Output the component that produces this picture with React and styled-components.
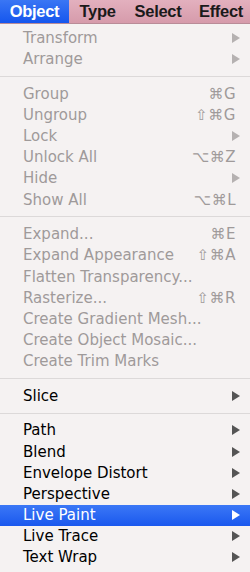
import React from "react";
import styled, { createGlobalStyle } from "styled-components";

const GlobalStyle = createGlobalStyle`
  html, body {
    margin: 0;
    padding: 0;
    background: #f5f2f2;
  }
  body {
    width: 250px;
    height: 572px;
    overflow: hidden;
  }
`;

const Screen = styled.div`
  width: 250px;
  height: 572px;
  display: flex;
  flex-direction: column;
  background: #f5f2f2;
  overflow: hidden;
`;

const MenuBar = styled.div`
  height: 24px;
  display: flex;
  align-items: stretch;
  background: linear-gradient(#e3b0be, #d69bab);
  border-bottom: 1px solid #b98c98;
  box-sizing: border-box;
  font-family: "Liberation Sans", Arial, sans-serif;
  font-weight: bold;
  font-size: 16.5px;
  letter-spacing: -0.3px;
`;

const Title = styled.div`
  width: ${(p) => p.$w}px;
  flex: none;
  display: flex;
  align-items: center;
  justify-content: center;
  color: ${(p) => (p.$active ? "#fff" : "#1a1a1a")};
  background: ${(p) =>
    p.$active ? "linear-gradient(#3a76f4, #1556ee)" : "transparent"};
  white-space: nowrap;
`;

const Menu = styled.div`
  display: flex;
  flex-direction: column;
  padding: 3.4px 0;
  font-family: "DejaVu Sans", sans-serif;
  font-size: 15px;
`;

const Row = styled.div`
  height: 21.17px;
  display: flex;
  align-items: center;
  padding: 0 10px 0 23px;
  color: ${(p) => (p.$active ? "#fff" : p.$disabled ? "#9f9a9a" : "#000")};
  background: ${(p) =>
    p.$active ? "linear-gradient(#3b78f6, #1a58ee)" : "transparent"};
  white-space: nowrap;
`;

const Label = styled.span`
  flex: 1;
`;

const Shortcut = styled.span`
  padding-right: 4px;
  letter-spacing: 0.5px;
`;

const Arrow = styled.span`
  width: 0;
  height: 0;
  border-top: 5px solid transparent;
  border-bottom: 5px solid transparent;
  border-left: 8px solid
    ${(p) => (p.$active ? "#fff" : p.$disabled ? "#b5b1b1" : "#555")};
`;

const Separator = styled.div`
  height: 13.5px;
  display: flex;
  align-items: center;

  &::after {
    content: "";
    flex: 1;
    height: 1px;
    background: #dcd9d9;
  }
`;

const titles = [
  { label: "Object", w: 69, active: true },
  { label: "Type", w: 57 },
  { label: "Select", w: 64 },
  { label: "Effect", w: 62 },
];

const groups = [
  [
    { label: "Transform", sub: true, disabled: true },
    { label: "Arrange", sub: true, disabled: true },
  ],
  [
    { label: "Group", key: "⌘G", disabled: true },
    { label: "Ungroup", key: "⇧⌘G", disabled: true },
    { label: "Lock", sub: true, disabled: true },
    { label: "Unlock All", key: "⌥⌘Z", disabled: true },
    { label: "Hide", sub: true, disabled: true },
    { label: "Show All", key: "⌥⌘L", disabled: true },
  ],
  [
    { label: "Expand...", key: "⌘E", disabled: true },
    { label: "Expand Appearance", key: "⇧⌘A", disabled: true },
    { label: "Flatten Transparency...", disabled: true },
    { label: "Rasterize...", key: "⇧⌘R", disabled: true },
    { label: "Create Gradient Mesh...", disabled: true },
    { label: "Create Object Mosaic...", disabled: true },
    { label: "Create Trim Marks", disabled: true },
  ],
  [{ label: "Slice", sub: true }],
  [
    { label: "Path", sub: true },
    { label: "Blend", sub: true },
    { label: "Envelope Distort", sub: true },
    { label: "Perspective", sub: true },
    { label: "Live Paint", sub: true, active: true },
    { label: "Live Trace", sub: true },
    { label: "Text Wrap", sub: true },
  ],
];

export default function App() {
  return (
    <Screen>
      <GlobalStyle />
      <MenuBar>
        {titles.map((t) => (
          <Title key={t.label} $w={t.w} $active={t.active}>
            {t.label}
          </Title>
        ))}
      </MenuBar>
      <Menu>
        {groups.map((items, gi) => (
          <React.Fragment key={gi}>
            {gi > 0 && <Separator />}
            {items.map((it) => (
              <Row key={it.label} $disabled={it.disabled} $active={it.active}>
                <Label>{it.label}</Label>
                {it.key && <Shortcut>{it.key}</Shortcut>}
                {it.sub && <Arrow $disabled={it.disabled} $active={it.active} />}
              </Row>
            ))}
          </React.Fragment>
        ))}
      </Menu>
    </Screen>
  );
}
